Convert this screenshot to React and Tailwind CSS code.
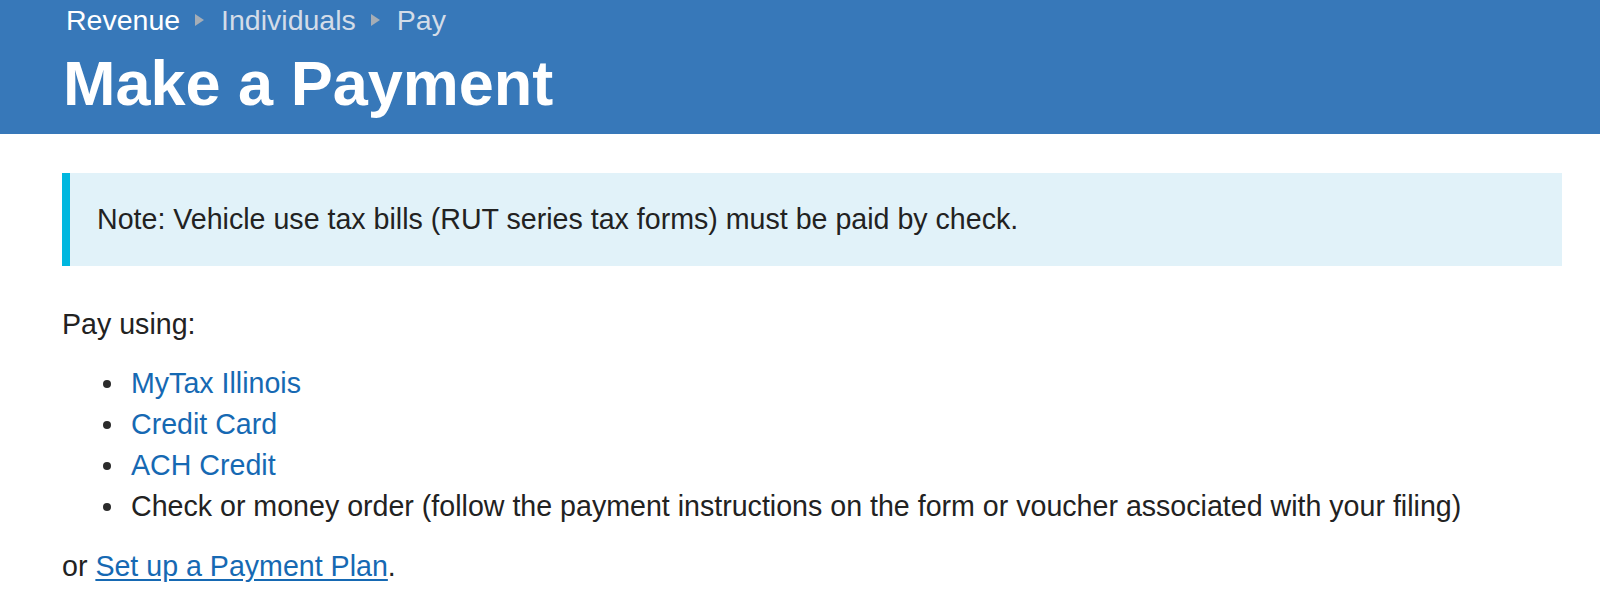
import React from "react";

function Arrow() {
  return (
    <svg width="11" height="14" viewBox="0 0 11 14" className="ml-[14px] mr-[16px] shrink-0">
      <path d="M1 1 L10 7 L1 13 Z" fill="#a5adb6" />
    </svg>
  );
}

function Bullet({ children }) {
  return (
    <li className="flex items-center">
      <span className="ml-[41px] mr-[20px] h-[8px] w-[8px] shrink-0 rounded-full bg-[#2b2b2b]" />
      <span>{children}</span>
    </li>
  );
}

export default function App() {
  return (
    <div className="min-h-[602px] bg-white text-[#222222]" style={{ fontFamily: '"Liberation Sans", Arial, Helvetica, sans-serif' }}>
      <header className="h-[134px] bg-[#3778b9] pl-[66px]">
        <nav className="flex items-center pt-[2px] text-[28.5px] leading-[36px]">
          <span className="text-white">Revenue</span>
          <Arrow />
          <span className="text-[#d3dce8]">Individuals</span>
          <Arrow />
          <span className="text-[#d3dce8]">Pay</span>
        </nav>
        <h1 className="-ml-[3px] mt-[9px] text-[63px] font-bold leading-[72px] text-white">Make a Payment</h1>
      </header>
      <main className="pl-[62px] text-[28.6px] leading-[41px]">
        <div className="mt-[39px] flex h-[93px] w-[1500px] items-center border-l-[8px] border-[#00b7df] bg-[#e1f2f9] pl-[27px]">
          Note: Vehicle use tax bills (RUT series tax forms) must be paid by check.
        </div>
        <p className="mt-[38px]">Pay using:</p>
        <ul className="mt-[18px]">
          <Bullet><a className="text-[#1669b3]">MyTax Illinois</a></Bullet>
          <Bullet><a className="text-[#1669b3]">Credit Card</a></Bullet>
          <Bullet><a className="text-[#1669b3]">ACH Credit</a></Bullet>
          <Bullet>Check or money order (follow the payment instructions on the form or voucher associated with your filing)</Bullet>
        </ul>
        <p className="mt-[19px]">
          or <a className="text-[#1669b3] underline underline-offset-[3px]">Set up a Payment Plan</a>.
        </p>
      </main>
    </div>
  );
}
